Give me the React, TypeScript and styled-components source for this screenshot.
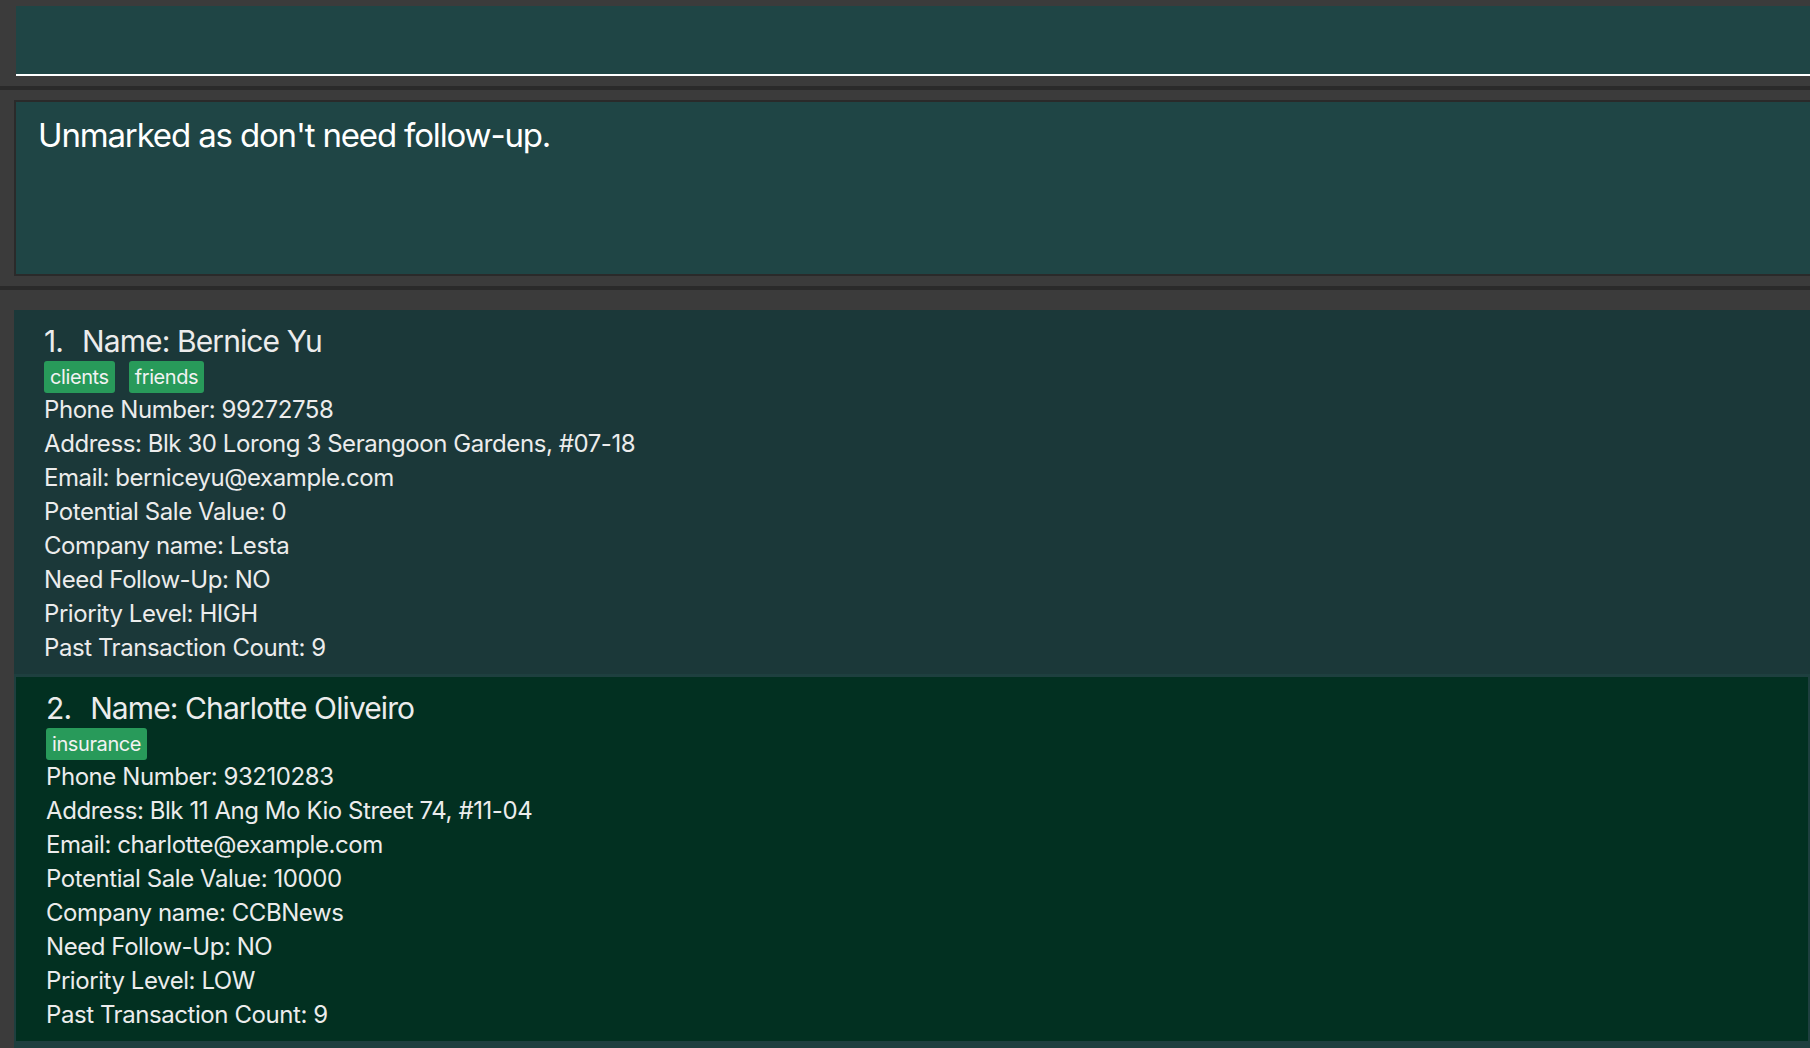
import React from 'react';
import styled, { createGlobalStyle } from 'styled-components';

const GlobalStyle = createGlobalStyle`
  html, body {
    margin: 0;
    padding: 0;
    background: #3b3b3b;
    font-family: Inter, "Noto Sans", sans-serif;
    overflow: hidden;
  }
`;

type Person = {
  name: string;
  tags: string[];
  phone: string;
  address: string;
  email: string;
  saleValue: string;
  company: string;
  followUp: string;
  priority: string;
  transactions: string;
};

const PERSONS: Person[] = [
  {
    name: 'Bernice Yu',
    tags: ['clients', 'friends'],
    phone: '99272758',
    address: 'Blk 30 Lorong 3 Serangoon Gardens, #07-18',
    email: 'berniceyu@example.com',
    saleValue: '0',
    company: 'Lesta',
    followUp: 'NO',
    priority: 'HIGH',
    transactions: '9',
  },
  {
    name: 'Charlotte Oliveiro',
    tags: ['insurance'],
    phone: '93210283',
    address: 'Blk 11 Ang Mo Kio Street 74, #11-04',
    email: 'charlotte@example.com',
    saleValue: '10000',
    company: 'CCBNews',
    followUp: 'NO',
    priority: 'LOW',
    transactions: '9',
  },
];

const Frame = styled.div`
  display: flex;
  flex-direction: column;
  height: 1048px;
  width: 1810px;
  overflow: hidden;
`;

const CommandSection = styled.div`
  padding: 6px 0 10px 16px;
`;

const CommandBox = styled.div`
  height: 68px;
  background: #1f4545;
  border-bottom: 2px solid #ffffff;
`;

const Divider = styled.div`
  height: 4px;
  background: #2a2a2a;
`;

const ResultSection = styled.div`
  padding: 10px 0 10px 14px;
`;

const ResultBox = styled.div`
  height: 172px;
  box-sizing: content-box;
  background: #1f4545;
  border: 2px solid #2a2a2a;
  border-right: none;
`;

const ResultText = styled.div`
  padding: 13px 0 0 22px;
  color: #ffffff;
  font-size: 33px;
  line-height: 40px;
  letter-spacing: -0.035em;
`;

const ListSection = styled.div`
  flex: 1;
  min-height: 0;
  padding: 20px 0 0 14px;
  display: flex;
`;

const ListView = styled.div`
  flex: 1;
  background: #1e3f3f;
  display: flex;
  flex-direction: column;
  gap: 3px;
  overflow: hidden;
`;

const Card = styled.div<{ $selected?: boolean }>`
  background: ${(p) => (p.$selected ? '#023021' : '#1b3839')};
  margin: ${(p) => (p.$selected ? '0 2px' : '0')};
  padding: 13px 0 9px 30px;
  color: #ececec;
  flex-shrink: 0;
`;

const NameRow = styled.div`
  display: flex;
  gap: 19px;
  font-size: 30px;
  line-height: 36px;
  letter-spacing: -0.03em;
`;

const TagRow = styled.div`
  display: flex;
  gap: 14px;
  margin-top: 2px;
`;

const Tag = styled.span`
  background: #289a5a;
  color: #f2f2f2;
  border-radius: 3px;
  padding: 4px 6px 3px;
  font-size: 20px;
  line-height: 25px;
  letter-spacing: -0.02em;
`;

const Field = styled.div`
  font-size: 24px;
  line-height: 34px;
  letter-spacing: -0.018em;
  white-space: nowrap;
`;

const PersonCard = ({
  index,
  person,
  selected,
}: {
  index: number;
  person: Person;
  selected?: boolean;
}) => (
  <Card $selected={selected}>
    <NameRow>
      <span>{index}.</span>
      <span>Name: {person.name}</span>
    </NameRow>
    <TagRow>
      {person.tags.map((t) => (
        <Tag key={t}>{t}</Tag>
      ))}
    </TagRow>
    <Field>Phone Number: {person.phone}</Field>
    <Field>Address: {person.address}</Field>
    <Field>Email: {person.email}</Field>
    <Field>Potential Sale Value: {person.saleValue}</Field>
    <Field>Company name: {person.company}</Field>
    <Field>Need Follow-Up: {person.followUp}</Field>
    <Field>Priority Level: {person.priority}</Field>
    <Field>Past Transaction Count: {person.transactions}</Field>
  </Card>
);

export default function App() {
  return (
    <Frame>
      <GlobalStyle />
      <CommandSection>
        <CommandBox />
      </CommandSection>
      <Divider />
      <ResultSection>
        <ResultBox>
          <ResultText>Unmarked as don't need follow-up.</ResultText>
        </ResultBox>
      </ResultSection>
      <Divider />
      <ListSection>
        <ListView>
          {PERSONS.map((p, i) => (
            <PersonCard key={p.email} index={i + 1} person={p} selected={i === 1} />
          ))}
        </ListView>
      </ListSection>
    </Frame>
  );
}
